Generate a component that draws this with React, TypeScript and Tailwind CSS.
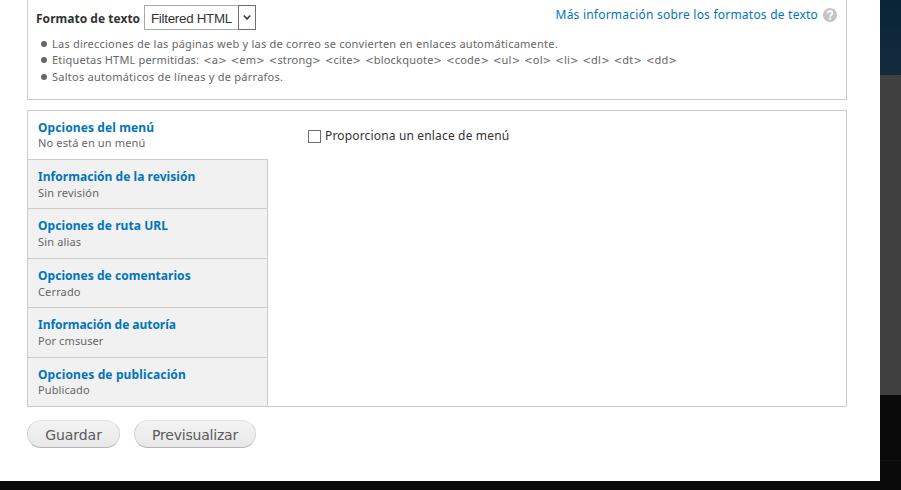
import React from 'react';

const tabs = [
  { title: 'Opciones del menú', note: 'No está en un menú', box: 'h-[49px] pt-[9px]', ls: 'tracking-[0.1px]', ns: 'tracking-[0.15px]' },
  { title: 'Información de la revisión', note: 'Sin revisión', box: 'h-[49px] pt-[9px]', ls: 'tracking-[0.04px]', ns: 'mt-px tracking-[0.2px]' },
  { title: 'Opciones de ruta URL', note: 'Sin alias', box: 'h-[50px] pt-[9px]', ls: 'tracking-[0.07px]', ns: 'mt-px tracking-[0.15px]' },
  { title: 'Opciones de comentarios', note: 'Cerrado', box: 'h-[49px] pt-[9px]', ls: 'tracking-[0.05px]', ns: 'mt-px tracking-[0.15px]' },
  { title: 'Información de autoría', note: 'Por cmsuser', box: 'h-[50px] pt-[9px]', ls: 'tracking-[-0.04px]', ns: 'mt-px tracking-[0.1px]' },
  { title: 'Opciones de publicación', note: 'Publicado', box: 'h-[48px] pt-[9px]', ls: 'tracking-[0.13px]', ns: 'tracking-[0.1px]' },
];

const tags = ['a', 'em', 'strong', 'cite', 'blockquote', 'code', 'ul', 'ol', 'li', 'dl', 'dt', 'dd'];

function Tag({ name }: { name: string }) {
  return (
    <>
      {' '}
      <span className="font-['DejaVu_Sans',sans-serif] text-[10px] leading-none">&lt;</span>
      {name}
      <span className="font-['DejaVu_Sans',sans-serif] text-[10px] leading-none">&gt;</span>
    </>
  );
}

function Tip({ children, box, className }: { children: React.ReactNode; box: string; className: string }) {
  return (
    <li className={`flex items-center whitespace-nowrap ${box}`}>
      <span className="mr-[5px] size-[6px] rounded-full bg-[#666]" />
      <span className={className}>{children}</span>
    </li>
  );
}

function TextFormat() {
  return (
    <section className="h-[100px] border border-t-0 border-[#ccc] pl-2 pr-[9px] pt-[5px]">
      <div className="flex h-[25px] justify-between">
        <div className="flex items-center">
          <label className="w-[108px] pt-[3px] text-[12px] font-bold tracking-[0.02px] text-[#333]">Formato de texto</label>
          <div className="flex h-[25px] w-[112px] border border-[#a9a9a9] bg-white">
            <span className="flex-1 whitespace-nowrap pl-[6px] font-['Liberation_Sans',Arial,sans-serif] text-[13.33px] leading-[25px] tracking-[-0.27px] text-[#333]">
              Filtered HTML
            </span>
            <span className="-mr-px -mt-px flex h-[25px] w-[18px] items-center justify-center border border-[#707070]">
              <svg width="8" height="7" viewBox="0 0 8 7" fill="none" stroke="#444" strokeWidth="1.7">
                <path d="M0.8 1.5 4 4.9 7.2 1.5" />
              </svg>
            </span>
          </div>
        </div>
        <a className="flex h-[20px] items-center text-[12px] tracking-[0.22px] text-[#0074bd]">
          Más información sobre los formatos de texto
          <svg className="ml-[5px]" width="14" height="14" viewBox="0 0 14 14">
            <circle cx="7" cy="7" r="7" fill="#c4c4c4" />
            <path d="M4.6 5.3C4.6 2.3 9.4 2.3 9.4 5.1C9.4 6.9 7.1 6.7 7.1 8.7" fill="none" stroke="#fff" strokeWidth="1.8" />
            <rect x="6.1" y="9.7" width="2" height="1.9" fill="#fff" />
          </svg>
        </a>
      </div>
      <ul className="pl-[5px] pt-[6px] text-[11px] text-[#666]">
        <Tip box="h-4" className="tracking-[0.23px]">
          Las direcciones de las páginas web y las de correo se convierten en enlaces automáticamente.
        </Tip>
        <Tip box="h-4" className="tracking-[0.2px] [word-spacing:0.9px]">
          <span className="[word-spacing:-0.2px]">Etiquetas HTML permitidas:</span>
          {tags.map((name) => (
            <Tag key={name} name={name} />
          ))}
        </Tip>
        <Tip box="h-[18px]" className="tracking-[0.25px]">
          Saltos automáticos de líneas y de párrafos.
        </Tip>
      </ul>
    </section>
  );
}

function VerticalTabs() {
  return (
    <section className="mt-[10px] flex h-[297px] items-start border border-[#ccc]">
      <ul className="w-[240px]">
        {tabs.map((t, i) => (
          <li
            key={t.title}
            className={`${t.box} pl-[10px] ${i === 0 ? 'bg-white' : 'border-r border-[#ccc] bg-[#f1f1f1]'} ${i < tabs.length - 1 ? 'border-b border-[#ccc]' : ''}`}
          >
            <div className={`h-[15px] whitespace-nowrap text-[12px] font-bold leading-[16px] text-[#0074bd] ${t.ls}`}>{t.title}</div>
            <div className={`whitespace-nowrap text-[11px] leading-[16px] text-[#666] ${t.ns}`}>{t.note}</div>
          </li>
        ))}
      </ul>
      <label className="ml-[40px] mt-[15px] flex h-[20px] items-center text-[12px] text-[#333]">
        <span className="mr-1 mt-px size-[13px] border border-[#707070] bg-white" />
        <span className="tracking-[0.16px]">Proporciona un enlace de menú</span>
      </label>
    </section>
  );
}

function Action({ children, className }: { children: React.ReactNode; className: string }) {
  return (
    <button
      className={`h-7 rounded-full border border-[#e4e4e4] border-x-[#d2d2d2] border-b-[#b4b4b4] bg-linear-to-b from-[#f3f3f3] to-[#e8e8e8] pt-[2px] font-['DejaVu_Sans',Verdana,sans-serif] text-[14px] leading-none text-[#5a5a5a] ${className}`}
    >
      {children}
    </button>
  );
}

export default function App() {
  return (
    <div className="flex h-[490px] w-[901px] flex-col overflow-hidden bg-[#0a0a0a] font-['Noto_Sans','Open_Sans',sans-serif]">
      <div className="flex h-[481px]">
        <main className="w-[880px] bg-white pl-[27px] pr-[33px]">
          <TextFormat />
          <VerticalTabs />
          <div className="mt-[13px] flex gap-[14px]">
            <Action className="w-[93px] tracking-[-0.05px]">Guardar</Action>
            <Action className="w-[122px] tracking-[-0.2px]">Previsualizar</Action>
          </div>
        </main>
        <aside className="w-[21px]">
          <div className="h-[75px] bg-linear-to-b from-[#092438] to-[#142b3d]" />
          <div className="h-[320px] bg-[#404040]" />
          <div className="h-[66px] border-b border-[#151515] bg-[#0a0a0a]" />
        </aside>
      </div>
    </div>
  );
}
